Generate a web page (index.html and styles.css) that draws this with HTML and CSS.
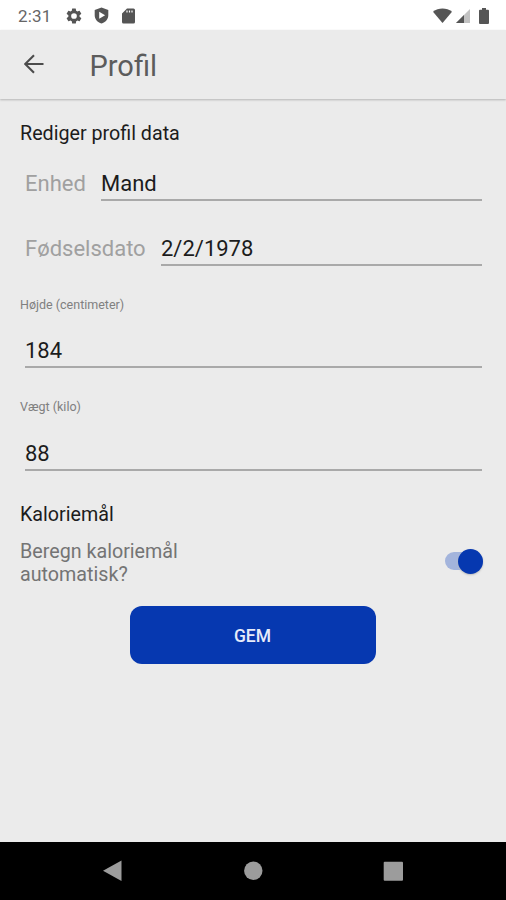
FILE: index.html
```html
<!DOCTYPE html>
<html lang="da">
<head>
<meta charset="utf-8">
<title>Profil</title>
<link rel="stylesheet" href="styles.css">
</head>
<body>
<div class="status">
  <span class="clock">2:31</span>
  <svg class="gear" width="18" height="18" viewBox="0 0 24 24"><path fill-rule="evenodd" d="M19.400 13a7.800 7.800 0 0 0 0-2l2.100-1.650a.5.5 0 0 0 .1-.65l-2-3.450a.5.5 0 0 0-.6-.2l-2.500 1a7.300 7.300 0 0 0-1.700-1l-.38-2.650a.5.5 0 0 0-.5-.4h-4a.5.5 0 0 0-.5.4L9.100 5.050a7.300 7.300 0 0 0-1.700 1l-2.500-1a.5.5 0 0 0-.6.2l-2 3.450a.5.5 0 0 0 .1.650L4.500 11a7.800 7.800 0 0 0 0 2l-2.100 1.650a.5.5 0 0 0-.1.650l2 3.450a.5.5 0 0 0 .6.2l2.500-1a7.300 7.300 0 0 0 1.700 1l.38 2.650a.5.5 0 0 0 .5.4h4a.5.5 0 0 0 .5-.4l.38-2.650a7.300 7.300 0 0 0 1.700-1l2.500 1a.5.5 0 0 0 .6-.2l2-3.450a.5.5 0 0 0-.1-.650zM12 15.800a3.800 3.800 0 1 1 0-7.600 3.800 3.800 0 0 1 0 7.600z"/></svg>
  <svg class="shield" width="15" height="17" viewBox="0 0 15 17"><path fill-rule="evenodd" d="M7.500.5 14.300 3v5.200c0 4-2.800 7-6.800 8.300C3.500 15.200.7 12.200.7 8.200V3zM5.200 4.700v7l5.900-3.500z"/></svg>
  <svg class="card" width="13" height="16" viewBox="0 0 13 16"><path fill-rule="evenodd" d="M5 .5h6.500A1.500 1.500 0 0 1 13 2v12a1.500 1.500 0 0 1-1.500 1.500h-10A1.500 1.500 0 0 1 0 14V5.500zM4.400 2.500v2h1.200v-2zm2.500 0v2h1.200v-2zm2.500 0v2h1.200v-2z"/></svg>
  <svg class="wifi" width="19" height="15" viewBox="0 0 19 15"><path d="M0 3.700C5.500-.6 13.500-.6 19 3.700L9.500 15z"/></svg>
  <svg class="signal" width="14" height="14" viewBox="0 0 14 14"><path class="faint" d="M14 0v14H0z"/><path d="M8 6v8H0z"/></svg>
  <svg class="battery" width="10" height="16" viewBox="0 0 10 16"><path d="M3 0h4v1.700h2q1 0 1 1V15q0 1-1 1H1q-1 0-1-1V2.700q0-1 1-1h2z"/></svg>
</div>
<header class="appbar">
  <svg width="20" height="20" viewBox="0 0 20 20"><path d="M19.500 10H1.500M10 1.200 1.200 10 10 18.800"/></svg>
  <h1>Profil</h1>
</header>
<main>
  <h2 class="heading">Rediger profil data</h2>
  <div class="row unit"><label>Enhed</label><div class="field">Mand</div></div>
  <div class="row birth"><label>Fødselsdato</label><div class="field">2/2/1978</div></div>
  <div class="caption height">Højde (centimeter)</div>
  <div class="field number first">184</div>
  <div class="caption weight">Vægt (kilo)</div>
  <div class="field number">88</div>
  <h2 class="heading goal">Kaloriemål</h2>
  <div class="option">
    <p>Beregn kaloriemål<br>automatisk?</p>
    <div class="switch"><span class="thumb"></span></div>
  </div>
  <button class="save">GEM</button>
</main>
<nav class="nav">
  <svg width="506" height="58" viewBox="0 0 506 58"><path d="M103 28.700 121.500 18.500V39z"/><circle cx="253.300" cy="28.800" r="9.200"/><rect x="383.700" y="19.800" width="19.300" height="19" rx="1"/></svg>
</nav>
</body>
</html>
```
FILE: styles.css
```css
* { box-sizing: border-box; }
body {
  margin: 0;
  height: 900px;
  display: flex;
  flex-direction: column;
  overflow: hidden;
  background: #ebebeb;
  color: #1c1c1c;
  font-family: Roboto, sans-serif;
}
svg { display: block; flex: none; }
h1, h2, p { margin: 0; font-weight: 400; }
.status {
  height: 30px;
  flex: none;
  display: flex;
  align-items: center;
  padding: 1px 17px 0 18px;
  background: #fff;
  color: #666;
  fill: #555;
}
.clock { width: 47px; font-size: 17px; line-height: 30px; letter-spacing: .2px; }
.shield { margin-left: 11px; }
.card { margin-left: 13px; }
.wifi { margin-left: auto; }
.signal { margin: 1px 9px 0 4px; }
.faint { fill: #c2c2c2; }
.appbar {
  height: 69px;
  flex: none;
  display: flex;
  align-items: center;
  padding: 0 24px;
  box-shadow: 0 1px 2px #b4b4b4;
}
.appbar svg { margin-bottom: 1px; fill: none; stroke: #4c4c4c; stroke-width: 2.100; }
.appbar h1 { margin: 3px 0 0 45.500px; font-size: 29px; line-height: 34px; color: #5c5c5c; }
main { flex: 1; padding: 22px 24px 0 20px; display: flex; flex-direction: column; }
.heading { height: 24px; font-size: 19.700px; line-height: 26px; }
.row { display: flex; height: 35px; padding-left: 5px; font-size: 22px; line-height: 36px; }
.row label { color: #a0a0a0; }
.row .field { flex: 1; }
.field { border-bottom: 2px solid #a9a9a9; font-size: 22px; }
.unit { margin-top: 21px; }
.unit label { width: 76px; }
.birth { margin-top: 30px; }
.birth label { width: 136px; }
.caption { font-size: 12.500px; line-height: 16px; color: #808080; }
.height { margin-top: 31px; }
.weight { margin-top: 31px; }
.number { height: 35px; margin: 21px 0 0 5px; line-height: 35px; }
.first { margin-top: 20px; }
.goal { margin-top: 31px; }
.option { display: flex; justify-content: space-between; align-items: center; margin-top: 14px; font-size: 19.700px; line-height: 23px; color: #747474; }
.switch {
  width: 38px;
  height: 18px;
  margin: 0 -1px 4px 0;
  border-radius: 9px;
  background: #a3b4dc;
  display: flex;
  align-items: center;
  justify-content: flex-end;
}
.thumb { width: 25px; height: 25px; flex: none; border-radius: 50%; background: #0638b0; box-shadow: 0 1px 2px #bbb; }
.save {
  align-self: center;
  width: 246px;
  height: 58px;
  margin: 20px 0 0 4px;
  padding: 1px 1px 0 0;
  border: 0;
  border-radius: 12px;
  background: #0638b0;
  color: #e6ebfa;
  font: 500 17.500px/20px Roboto, sans-serif;
}
.nav { height: 58px; flex: none; background: #000; fill: #9c9c9c; }
```
